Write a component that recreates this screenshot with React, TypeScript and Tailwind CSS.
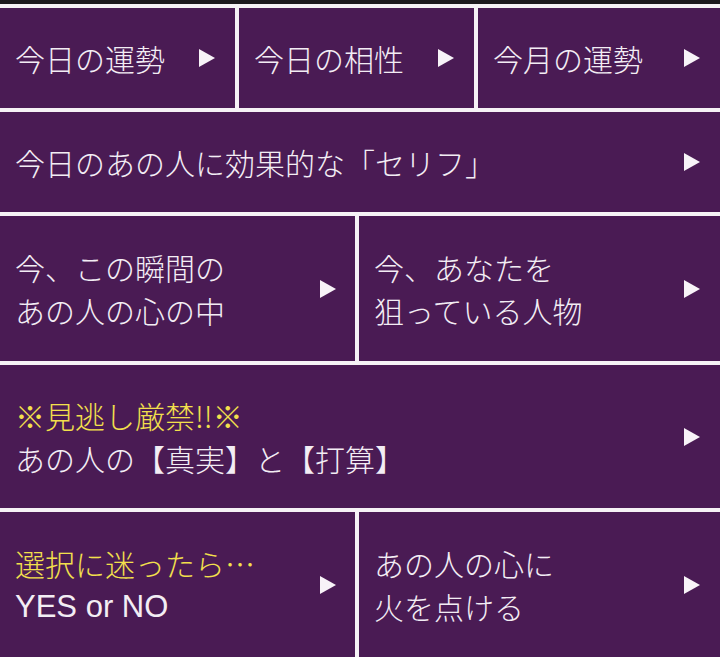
const font = { fontFamily: '"Noto Sans CJK JP", "Noto Sans", sans-serif' };

function Arrow() {
  return (
    <svg width="18" height="20" viewBox="0 0 18 20" className="shrink-0">
      <path d="M1 1 L17 10 L1 19 Z" fill="#f8f3f8" />
    </svg>
  );
}

interface CellProps {
  lines: { text: string; yellow?: boolean; latin?: boolean }[];
  className?: string;
  arrowPad?: string;
}

function Cell({ lines, className = '', arrowPad = 'pr-[19px]' }: CellProps) {
  return (
    <div className={`flex items-center justify-between bg-[#4a1b54] pl-[15px] ${arrowPad} ${className}`}>
      <div className="text-[30px] leading-[43px] font-light">
        {lines.map((l, i) => (
          <div
            key={i}
            className={`${l.yellow ? 'text-[#f3e04c]' : 'text-[#f3edf4]'} ${l.latin ? 'font-["Liberation_Sans",sans-serif] text-[31px] font-normal text-[#efe8f0]' : ''}`}
          >
            {l.text}
          </div>
        ))}
      </div>
      <Arrow />
    </div>
  );
}

export default function App() {
  return (
    <div className="w-[720px] h-[657px] bg-[#f6f2f6] flex flex-col gap-[4px] overflow-hidden" style={font}>
      <div className="h-[4px] bg-[#1d1a1e] shrink-0" />
      <div className="flex gap-[4px] h-[100px] shrink-0">
        <Cell className="w-[235px]" lines={[{ text: '今日の運勢' }]} />
        <Cell className="w-[235px]" lines={[{ text: '今日の相性' }]} />
        <Cell className="flex-1" lines={[{ text: '今月の運勢' }]} />
      </div>
      <div className="flex h-[100px] shrink-0">
        <Cell className="flex-1" lines={[{ text: '今日のあの人に効果的な「セリフ」' }]} />
      </div>
      <div className="flex gap-[4px] h-[145px] shrink-0">
        <Cell className="w-[355px]" arrowPad="pr-[18px]" lines={[{ text: '今、この瞬間の' }, { text: 'あの人の心の中' }]} />
        <Cell className="flex-1" lines={[{ text: '今、あなたを' }, { text: '狙っている人物' }]} />
      </div>
      <div className="flex h-[143px] shrink-0">
        <Cell className="flex-1" lines={[{ text: '※見逃し厳禁!!※', yellow: true }, { text: 'あの人の【真実】と【打算】' }]} />
      </div>
      <div className="flex gap-[4px] flex-1">
        <Cell className="w-[355px]" arrowPad="pr-[18px]" lines={[{ text: '選択に迷ったら…', yellow: true }, { text: 'YES or NO', latin: true }]} />
        <Cell className="flex-1" lines={[{ text: 'あの人の心に' }, { text: '火を点ける' }]} />
      </div>
    </div>
  );
}
